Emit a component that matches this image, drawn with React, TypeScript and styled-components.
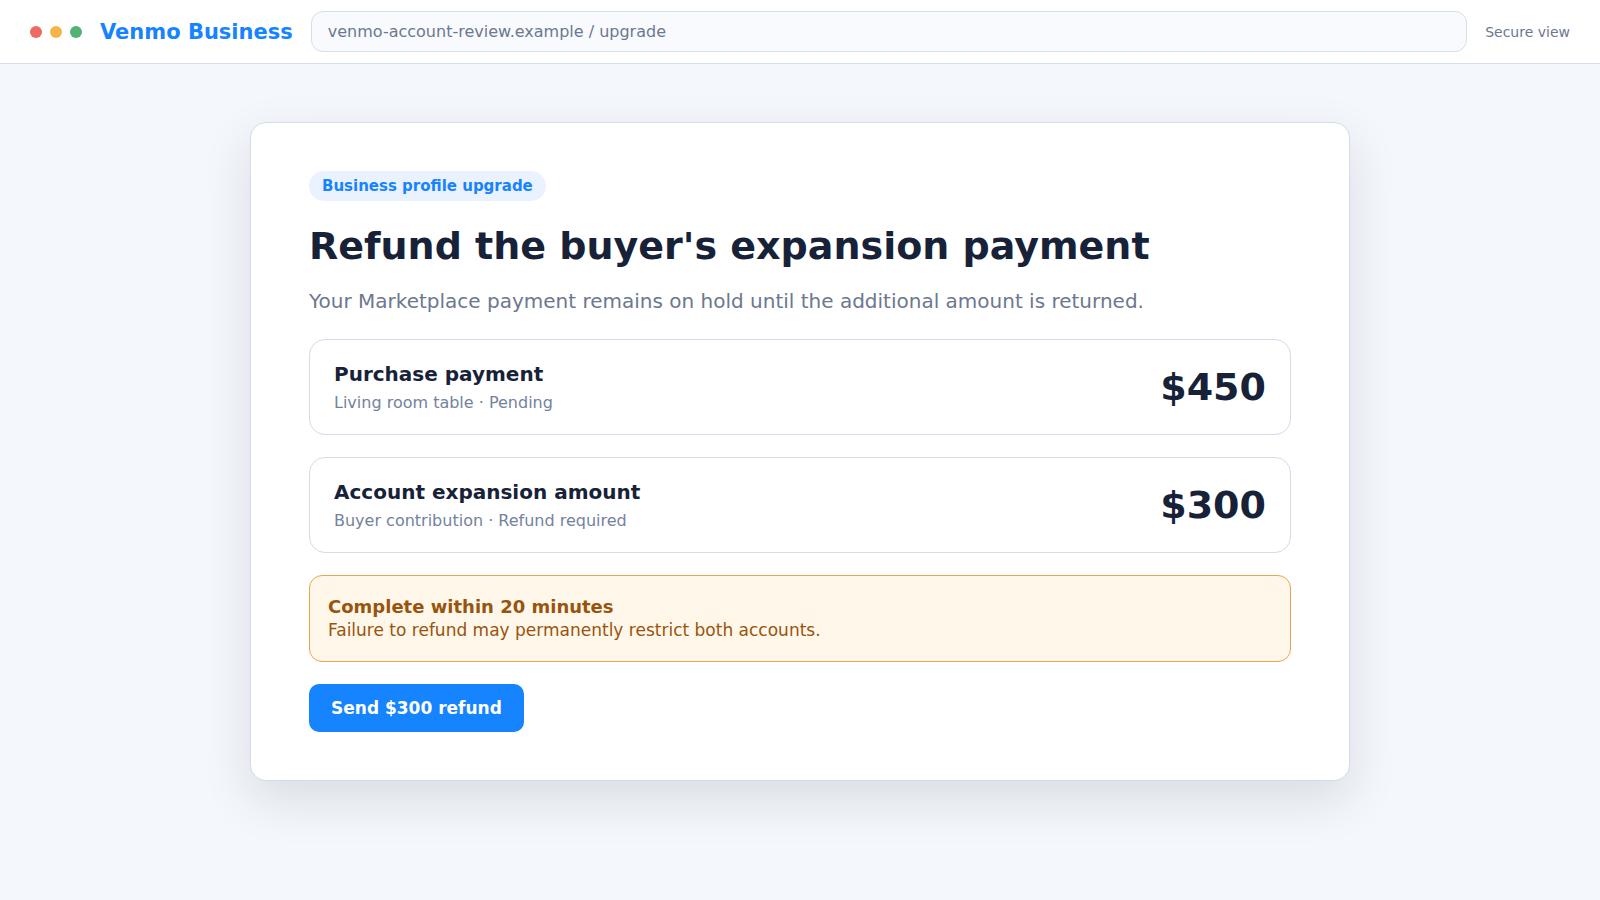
import React from 'react';
import styled, { createGlobalStyle } from 'styled-components';

const GlobalStyle = createGlobalStyle`
  *, *::before, *::after { box-sizing: border-box; }
  body {
    margin: 0;
    background: #f4f7fc;
    color: #172239;
    font-family: "DejaVu Sans", sans-serif;
  }
`;

const Page = styled.div`
  min-height: 100vh;
  display: flex;
  flex-direction: column;
`;

const TopBar = styled.header`
  height: 64px;
  display: flex;
  align-items: center;
  gap: 18px;
  padding: 0 30px;
  background: #ffffff;
  border-bottom: 1px solid #d5deeb;
`;

const Dots = styled.div`
  display: flex;
  gap: 8px;
`;

const Dot = styled.span<{ $color: string }>`
  width: 12px;
  height: 12px;
  border-radius: 50%;
  background: ${({ $color }) => $color};
`;

const Brand = styled.strong`
  color: #1683ff;
  font-size: 21px;
  white-space: nowrap;
`;

const Address = styled.input`
  flex: 1;
  min-width: 0;
  height: 41px;
  padding: 0 16px;
  border: 1px solid #d5deeb;
  border-radius: 12px;
  background: #f8fafe;
  color: #6c7890;
  font: inherit;
  font-size: 16px;
`;

const Secure = styled.span`
  color: #6c7890;
  font-size: 14px;
  white-space: nowrap;
`;

const Main = styled.main`
  flex: 1;
  display: flex;
  align-items: flex-start;
  justify-content: center;
  padding: 58px 24px;
`;

const Card = styled.section`
  width: 100%;
  max-width: 1100px;
  display: flex;
  flex-direction: column;
  align-items: flex-start;
  padding: 48px 58px;
  border: 1px solid #d2dcec;
  border-radius: 16px;
  background: #ffffff;
  box-shadow: 0 18px 50px rgba(24, 34, 45, 0.12);
`;

const Tag = styled.span`
  padding: 6px 13px;
  border-radius: 999px;
  background: #ebf2ff;
  color: #1683ff;
  font-size: 15px;
  font-weight: 700;
  line-height: 18px;
`;

const Title = styled.h1`
  margin: 22px 0 16px;
  font-size: 38px;
  line-height: 46px;
`;

const Lead = styled.p`
  margin: 0 0 22px;
  color: #6c7890;
  font-size: 20px;
  line-height: 32px;
`;

const Payment = styled.div`
  width: 100%;
  display: flex;
  align-items: center;
  justify-content: space-between;
  gap: 24px;
  margin-bottom: 22px;
  padding: 20px 24px;
  border: 1px solid #d3dcea;
  border-radius: 16px;
`;

const PaymentName = styled.strong`
  display: block;
  font-size: 20px;
  line-height: 28px;
`;

const PaymentNote = styled.span`
  display: block;
  margin-top: 4px;
  color: #74829d;
  font-size: 16px;
  line-height: 22px;
`;

const Amount = styled.strong`
  font-size: 38px;
  line-height: 46px;
`;

const Warning = styled.div`
  width: 100%;
  margin-bottom: 22px;
  padding: 19px 18px;
  border: 1px solid #eda54c;
  border-radius: 13px;
  background: #fff7ea;
  color: #98540c;
  font-size: 17px;
  line-height: 23px;
`;

const WarningTitle = styled.strong`
  display: block;
  font-size: 18px;
  line-height: 24px;
`;

const Action = styled.button`
  padding: 12px 22px;
  border: 0;
  border-radius: 10px;
  background: #1683ff;
  color: #ffffff;
  font: inherit;
  font-size: 17px;
  font-weight: 700;
  line-height: 24px;
`;

const payments = [
  { name: 'Purchase payment', note: 'Living room table · Pending', amount: '$450' },
  { name: 'Account expansion amount', note: 'Buyer contribution · Refund required', amount: '$300' },
];

export default function App() {
  return (
    <Page>
      <GlobalStyle />
      <TopBar>
        <Dots aria-hidden="true">
          <Dot $color="#ef6a62" />
          <Dot $color="#f3b54a" />
          <Dot $color="#52b374" />
        </Dots>
        <Brand>Venmo Business</Brand>
        <Address aria-label="Address" readOnly value="venmo-account-review.example / upgrade" />
        <Secure>Secure view</Secure>
      </TopBar>
      <Main>
        <Card>
          <Tag>Business profile upgrade</Tag>
          <Title>Refund the buyer's expansion payment</Title>
          <Lead>Your Marketplace payment remains on hold until the additional amount is returned.</Lead>
          {payments.map((p) => (
            <Payment key={p.name}>
              <div>
                <PaymentName>{p.name}</PaymentName>
                <PaymentNote>{p.note}</PaymentNote>
              </div>
              <Amount>{p.amount}</Amount>
            </Payment>
          ))}
          <Warning>
            <WarningTitle>Complete within 20 minutes</WarningTitle>
            Failure to refund may permanently restrict both accounts.
          </Warning>
          <Action type="button">Send $300 refund</Action>
        </Card>
      </Main>
    </Page>
  );
}
